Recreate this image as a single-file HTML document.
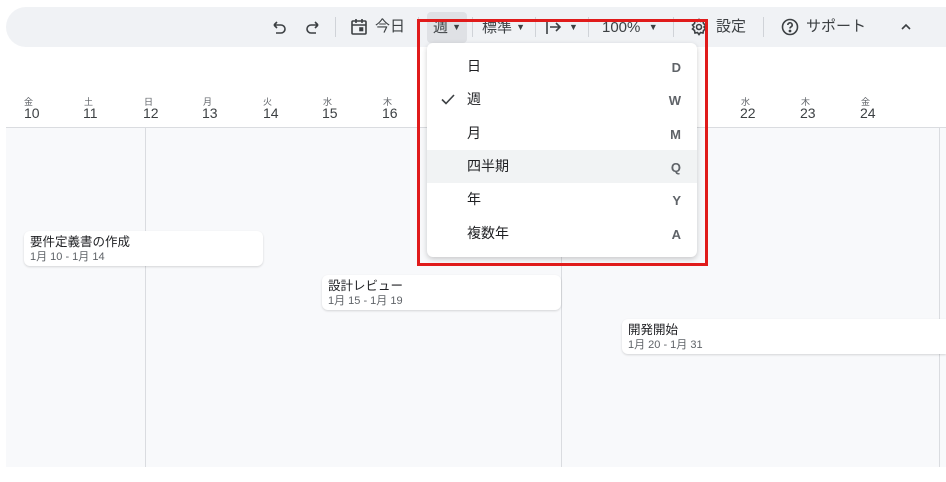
<!DOCTYPE html>
<html><head><meta charset="utf-8"><style>
*{margin:0;padding:0;box-sizing:border-box}
body{width:946px;height:482px;background:#fff;font-family:"Liberation Sans","Noto Sans CJK JP",sans-serif;position:relative;overflow:hidden;color:#3c4043}
.tb{position:absolute;left:6px;top:7px;width:940px;height:40px;background:#f0f2f5;border-radius:20px 0 0 20px}
.t{position:absolute;top:17px;font-size:15px;line-height:20px;height:20px;color:#3c4043;white-space:nowrap}
.t small{font-size:9px;vertical-align:2px}
.sep{position:absolute;top:17px;width:1px;height:20px;background:#d0d3d8}
.body{position:absolute;left:6px;top:127px;width:940px;height:340px;background:#f8f9fb;border-top:1px solid #dadce0}
.vl{position:absolute;top:128px;width:1px;height:339px;background:#dadce0}
.d{position:absolute;top:95px;font-size:9px;color:#5f6368}
.n{position:absolute;top:105px;font-size:14px;color:#3c4043}
.card{position:absolute;background:#fff;border-radius:6px;box-shadow:0 1px 2px rgba(0,0,0,.15);padding:3px 6px}
.card .a{font-size:12.5px;color:#202124;line-height:16px}
.card .b{font-size:11px;color:#5f6368;line-height:15px}
.menu{position:absolute;left:427px;top:43px;width:270px;height:214px;background:#fff;border-radius:6px;box-shadow:0 2px 6px rgba(0,0,0,.2)}
.mi{position:absolute;left:0;width:270px;height:33px;font-size:14px;line-height:17px;color:#202124}
.mi span{position:absolute;left:40px;top:8px}
.mi i{position:absolute;right:16px;top:9px;font-style:normal;color:#5f6368;font-weight:bold;font-size:13px;line-height:17px}
.red{position:absolute;left:417px;top:19px;width:291px;height:247px;border:3px solid #e01b1b}
</style></head><body>
<div class="tb"></div>
<svg style="position:absolute;left:270px;top:19px" width="60" height="18" viewBox="0 0 60 18" fill="none" stroke="#3c4043" stroke-width="1.6"><path d="M4 6h7a4 4 0 0 1 0 8H6M4 6l3-3M4 6l3 3"/><path d="M48 6h-7a4 4 0 0 0 0 8h5M48 6l-3-3M48 6l-3 3"/></svg>
<div class="sep" style="left:335px"></div>
<svg style="position:absolute;left:350px;top:18px" width="18" height="18" viewBox="0 0 18 18" fill="none" stroke="#3c4043" stroke-width="1.6"><rect x="2" y="3" width="14" height="13" rx="1"/><path d="M2 7h14M6 1v4M12 1v4"/><rect x="10" y="10" width="2.5" height="2.5" fill="#3c4043"/></svg>
<div class="t" style="left:375px">今日</div>
<div class="sep" style="left:418px"></div>
<div style="position:absolute;left:427px;top:12px;width:40px;height:31px;background:#dfe1e5;border-radius:4px"></div>
<div class="t" style="left:433px">週 <small>▼</small></div>
<div class="sep" style="left:472px"></div>
<div class="t" style="left:482px">標準 <small>▼</small></div>
<div class="sep" style="left:535px"></div>
<svg style="position:absolute;left:545px;top:19px" width="18" height="16" viewBox="0 0 18 16" fill="none" stroke="#3c4043" stroke-width="1.6"><path d="M2 1v14M5 8h10M11 4l4 4-4 4"/></svg>
<div class="t" style="left:569px"><small>▼</small></div>
<div class="sep" style="left:588px"></div>
<div class="t" style="left:602px">100% &nbsp;<small>▼</small></div>
<div class="sep" style="left:673px"></div>
<svg style="position:absolute;left:690px;top:18px" width="18" height="18" viewBox="0 0 18 18" fill="none" stroke="#3c4043" stroke-width="1.6"><circle cx="9" cy="9" r="2.5"/><path d="M9 1.5l1.5 2 2.5-.5.5 2.5 2 1.5-1.5 2 1.5 2-2 1.5-.5 2.5-2.5-.5L9 16.5l-1.5-2-2.5.5-.5-2.5-2-1.5 1.5-2-1.5-2 2-1.5.5-2.5 2.5.5z"/></svg>
<div class="t" style="left:716px">設定</div>
<div class="sep" style="left:763px"></div>
<svg style="position:absolute;left:781px;top:18px" width="18" height="18" viewBox="0 0 18 18" fill="none" stroke="#3c4043" stroke-width="1.6"><circle cx="9" cy="9" r="7.5"/><path d="M6.8 7a2.2 2.2 0 1 1 3 2c-.6.3-.8.7-.8 1.5" /><circle cx="9" cy="13" r=".6" fill="#3c4043"/></svg>
<div class="t" style="left:806px">サポート</div>
<svg style="position:absolute;left:899px;top:22px" width="14" height="10" viewBox="0 0 14 10" fill="none" stroke="#3c4043" stroke-width="1.6"><path d="M3 7l4-4 4 4"/></svg>

<div class="body"></div>
<div class="vl" style="left:145px"></div>
<div class="vl" style="left:561px"></div>
<div class="vl" style="left:939px"></div>

<div class="d" style="left:24px">金</div><div class="n" style="left:24px">10</div>
<div class="d" style="left:84px">土</div><div class="n" style="left:83px">11</div>
<div class="d" style="left:144px">日</div><div class="n" style="left:143px">12</div>
<div class="d" style="left:203px">月</div><div class="n" style="left:202px">13</div>
<div class="d" style="left:263px">火</div><div class="n" style="left:263px">14</div>
<div class="d" style="left:323px">水</div><div class="n" style="left:322px">15</div>
<div class="d" style="left:383px">木</div><div class="n" style="left:382px">16</div>
<div class="d" style="left:741px">水</div><div class="n" style="left:740px">22</div>
<div class="d" style="left:801px">木</div><div class="n" style="left:800px">23</div>
<div class="d" style="left:861px">金</div><div class="n" style="left:860px">24</div>

<div class="card" style="left:24px;top:231px;width:239px;height:35px"><div class="a">要件定義書の作成</div><div class="b">1月 10 - 1月 14</div></div>
<div class="card" style="left:322px;top:275px;width:239px;height:35px"><div class="a">設計レビュー</div><div class="b">1月 15 - 1月 19</div></div>
<div class="card" style="left:622px;top:319px;width:324px;height:35px;border-radius:6px 0 0 6px"><div class="a">開発開始</div><div class="b">1月 20 - 1月 31</div></div>

<div class="menu">
<div class="mi" style="top:7px"><span>日</span><i>D</i></div>
<div class="mi" style="top:40px"><svg style="position:absolute;left:14px;top:11px" width="14" height="11" viewBox="0 0 14 11" fill="none" stroke="#3c4043" stroke-width="1.6"><path d="M1 5.5l4 4L13 1"/></svg><span>週</span><i>W</i></div>
<div class="mi" style="top:74px"><span>月</span><i>M</i></div>
<div class="mi" style="top:107px;background:#f1f3f4"><span>四半期</span><i>Q</i></div>
<div class="mi" style="top:140px"><span>年</span><i>Y</i></div>
<div class="mi" style="top:174px"><span>複数年</span><i>A</i></div>
</div>
<div class="red"></div>
</body></html>
